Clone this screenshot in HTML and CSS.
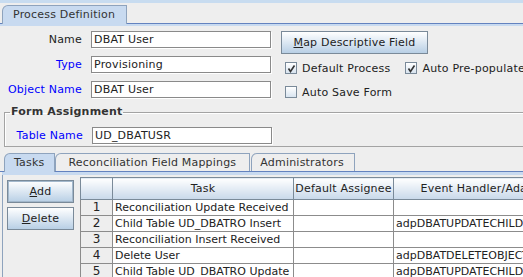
FILE: index.html
```html
<!DOCTYPE html>
<html lang="en">
<head>
    <meta charset="UTF-8">
    <title>Process Definition</title>
    <link rel="stylesheet" href="styles.css">
</head>
<body>
    <div class="app">
        <div class="top-strip"></div>
        <div class="main-tabs">
            <div class="tab tab-selected">Process Definition</div>
        </div>
        <div class="tab-band"></div>

        <div class="definition">
            <div class="fields">
                <div class="field-row">
                    <span class="field-label">Name</span>
                    <div class="text-field">DBAT User</div>
                </div>
                <div class="field-row">
                    <span class="field-label link">Type</span>
                    <div class="text-field">Provisioning</div>
                </div>
                <div class="field-row">
                    <span class="field-label link">Object Name</span>
                    <div class="text-field">DBAT User</div>
                </div>
            </div>
            <div class="options">
                <button class="button map-button"><u>M</u>ap Descriptive Field</button>
                <div class="check-row">
                    <label class="check default-process">
                        <span class="check-box"><svg width="9" height="9" viewBox="0 0 9 9"><path d="M1.5 4.5 L3.5 7.5 L7.5 1.5" fill="none" stroke="#333" stroke-width="1.6"/></svg></span>
                        Default Process
                    </label>
                    <label class="check">
                        <span class="check-box"><svg width="9" height="9" viewBox="0 0 9 9"><path d="M1.5 4.5 L3.5 7.5 L7.5 1.5" fill="none" stroke="#333" stroke-width="1.6"/></svg></span>
                        Auto Pre-populate
                    </label>
                </div>
                <div class="check-row">
                    <label class="check">
                        <span class="check-box"></span>
                        Auto Save Form
                    </label>
                </div>
            </div>
        </div>

        <fieldset class="form-assignment">
            <legend>Form Assignment</legend>
            <div class="field-row">
                <span class="field-label link table-label">Table Name</span>
                <div class="text-field">UD_DBATUSR</div>
            </div>
        </fieldset>

        <div class="sub-tabs">
            <div class="tab tab-selected tasks-tab">Tasks</div>
            <div class="tab recon-tab">Reconciliation Field Mappings</div>
            <div class="tab admin-tab">Administrators</div>
        </div>
        <div class="sub-band"></div>

        <div class="tasks-panel">
            <div class="task-buttons">
                <button class="button default-button"><u>A</u>dd</button>
                <button class="button"><u>D</u>elete</button>
            </div>
            <table class="task-table">
                <colgroup>
                    <col class="col-num">
                    <col class="col-task">
                    <col class="col-assignee">
                    <col class="col-handler">
                </colgroup>
                <thead>
                    <tr>
                        <th></th>
                        <th>Task</th>
                        <th>Default Assignee</th>
                        <th>Event Handler/Adapter</th>
                    </tr>
                </thead>
                <tbody>
                    <tr><td class="num">1</td><td>Reconciliation Update Received</td><td></td><td></td></tr>
                    <tr><td class="num">2</td><td>Child Table UD_DBATRO Insert</td><td></td><td>adpDBATUPDATECHILDTABLE</td></tr>
                    <tr><td class="num">3</td><td>Reconciliation Insert Received</td><td></td><td></td></tr>
                    <tr><td class="num">4</td><td>Delete User</td><td></td><td>adpDBATDELETEOBJECT</td></tr>
                    <tr><td class="num">5</td><td>Child Table UD_DBATRO Update</td><td></td><td>adpDBATUPDATECHILDTABLE</td></tr>
                </tbody>
            </table>
        </div>
    </div>
</body>
</html>
```

FILE: styles.css
```css
body {
    margin: 0;
    background-color: #eeeeee;
    font-family: "DejaVu Sans", sans-serif;
    font-size: 11px;
    letter-spacing: 0.2px;
    color: #333333;
    overflow: hidden;
}
.app {
    width: 600px;
    height: 277px;
    overflow: hidden;
}
.top-strip {
    height: 3px;
    background-color: #c8dcf0;
}
.main-tabs {
    display: flex;
    align-items: flex-end;
    height: 20px;
    padding-left: 2px;
    border-bottom: 1px solid #6382bf;
}
.tab {
    height: 18px;
    line-height: 17px;
    padding: 0 11px 0 10px;
    box-sizing: border-box;
    border: 1px solid #8ea3bd;
    border-bottom: none;
    border-top-left-radius: 6px;
    background-color: #eeeeee;
    white-space: nowrap;
}
.tab-selected {
    background-color: #c8daf0;
    height: 19px;
    margin-bottom: -1px;
    position: relative;
}
.tab-band {
    height: 2px;
    background-color: #c8daf0;
}
.definition {
    display: flex;
    padding-top: 5px;
}
.fields {
    display: flex;
    flex-direction: column;
    gap: 8px;
}
.field-row {
    display: flex;
    align-items: center;
    height: 17px;
}
.field-label {
    width: 82px;
    margin-right: 9px;
    text-align: right;
    color: #222222;
}
.link {
    color: #0000ff;
}
.text-field {
    width: 180px;
    height: 17px;
    box-sizing: border-box;
    padding-left: 2px;
    line-height: 15px;
    border: 1px solid #8a8a8a;
    box-shadow: 1px 1px 0 #ffffff;
    background-color: #ffffff;
    color: #222222;
}
.options {
    margin-left: 10px;
    display: flex;
    flex-direction: column;
}
.button {
    font-family: "DejaVu Sans", sans-serif;
    font-size: 11px;
    letter-spacing: 0.2px;
    color: #222222;
    height: 23px;
    padding: 0;
    border: 1px solid #7a8a99;
    background: linear-gradient(#ffffff, #b8cfe5);
}
.map-button {
    width: 147px;
}
.check-row {
    display: flex;
    height: 16px;
    align-items: center;
    margin-top: 6px;
}
.check-row + .check-row {
    margin-top: 8px;
}
.check {
    display: flex;
    align-items: center;
    margin-left: 4px;
    color: #222222;
}
.default-process {
    margin-right: 11px;
}
.check-box {
    display: flex;
    align-items: center;
    justify-content: center;
    width: 12px;
    height: 12px;
    box-sizing: border-box;
    margin-right: 5px;
    border: 1px solid #7a8a99;
    background: linear-gradient(#ffffff, #d8e4f0);
}
.form-assignment {
    margin: 5px 0 0 4px;
    padding: 8px 0 2px 0;
    border: 1px solid #a3a3a3;
    box-shadow: inset 1px 1px 0 #ffffff;
}
.form-assignment legend {
    margin-left: 5px;
    padding: 0 1px;
    font-weight: bold;
    font-size: 11px;
    color: #333333;
    line-height: 14px;
}
.table-label {
    width: 78px;
}
.sub-tabs {
    display: flex;
    align-items: flex-end;
    height: 18px;
    margin-top: 6px;
    padding-left: 4px;
    border-bottom: 1px solid #6382bf;
}
.tasks-tab {
    padding: 0 10px 0 9px;
}
.recon-tab {
    padding: 0 13px 0 12px;
}
.admin-tab {
    margin-left: 1px;
    padding: 0 10px 0 8px;
}
.sub-band {
    height: 3px;
    margin-left: 2px;
    background-color: #c8daf0;
}
.tasks-panel {
    display: flex;
    align-items: flex-start;
    margin-left: 2px;
    padding: 2px 0 0 4px;
    border-left: 1px solid #8ea3bd;
    height: 120px;
}
.task-buttons {
    display: flex;
    flex-direction: column;
    gap: 4px;
    padding-top: 3px;
    width: 67px;
}
.task-buttons .button {
    width: 67px;
}
.default-button {
    box-shadow: inset 0 0 0 1px #a3b8cc;
}
.task-table {
    margin-left: 6px;
    border-collapse: collapse;
    table-layout: fixed;
    width: 497px;
    background-color: #ffffff;
    letter-spacing: 0;
}
.col-num { width: 32px; }
.col-task { width: 181px; }
.col-assignee { width: 100px; }
.col-handler { width: 184px; }
.task-table thead tr {
    height: 22px;
}
.task-table th {
    padding: 0;
    font-weight: normal;
    letter-spacing: 0.2px;
    color: #222222;
    border: 1px solid #7a8a99;
    background: linear-gradient(#ffffff, #c8d8ea);
    white-space: nowrap;
    overflow: hidden;
}
.task-table tbody tr {
    height: 16px;
}
.task-table td {
    padding: 0 0 0 2px;
    border: 1px solid #8c8c8c;
    color: #222222;
    white-space: nowrap;
    overflow: hidden;
    line-height: 13px;
}
.task-table td.num {
    padding: 0;
    text-align: center;
    background-color: #eeeeee;
    font-size: 12px;
}
```
